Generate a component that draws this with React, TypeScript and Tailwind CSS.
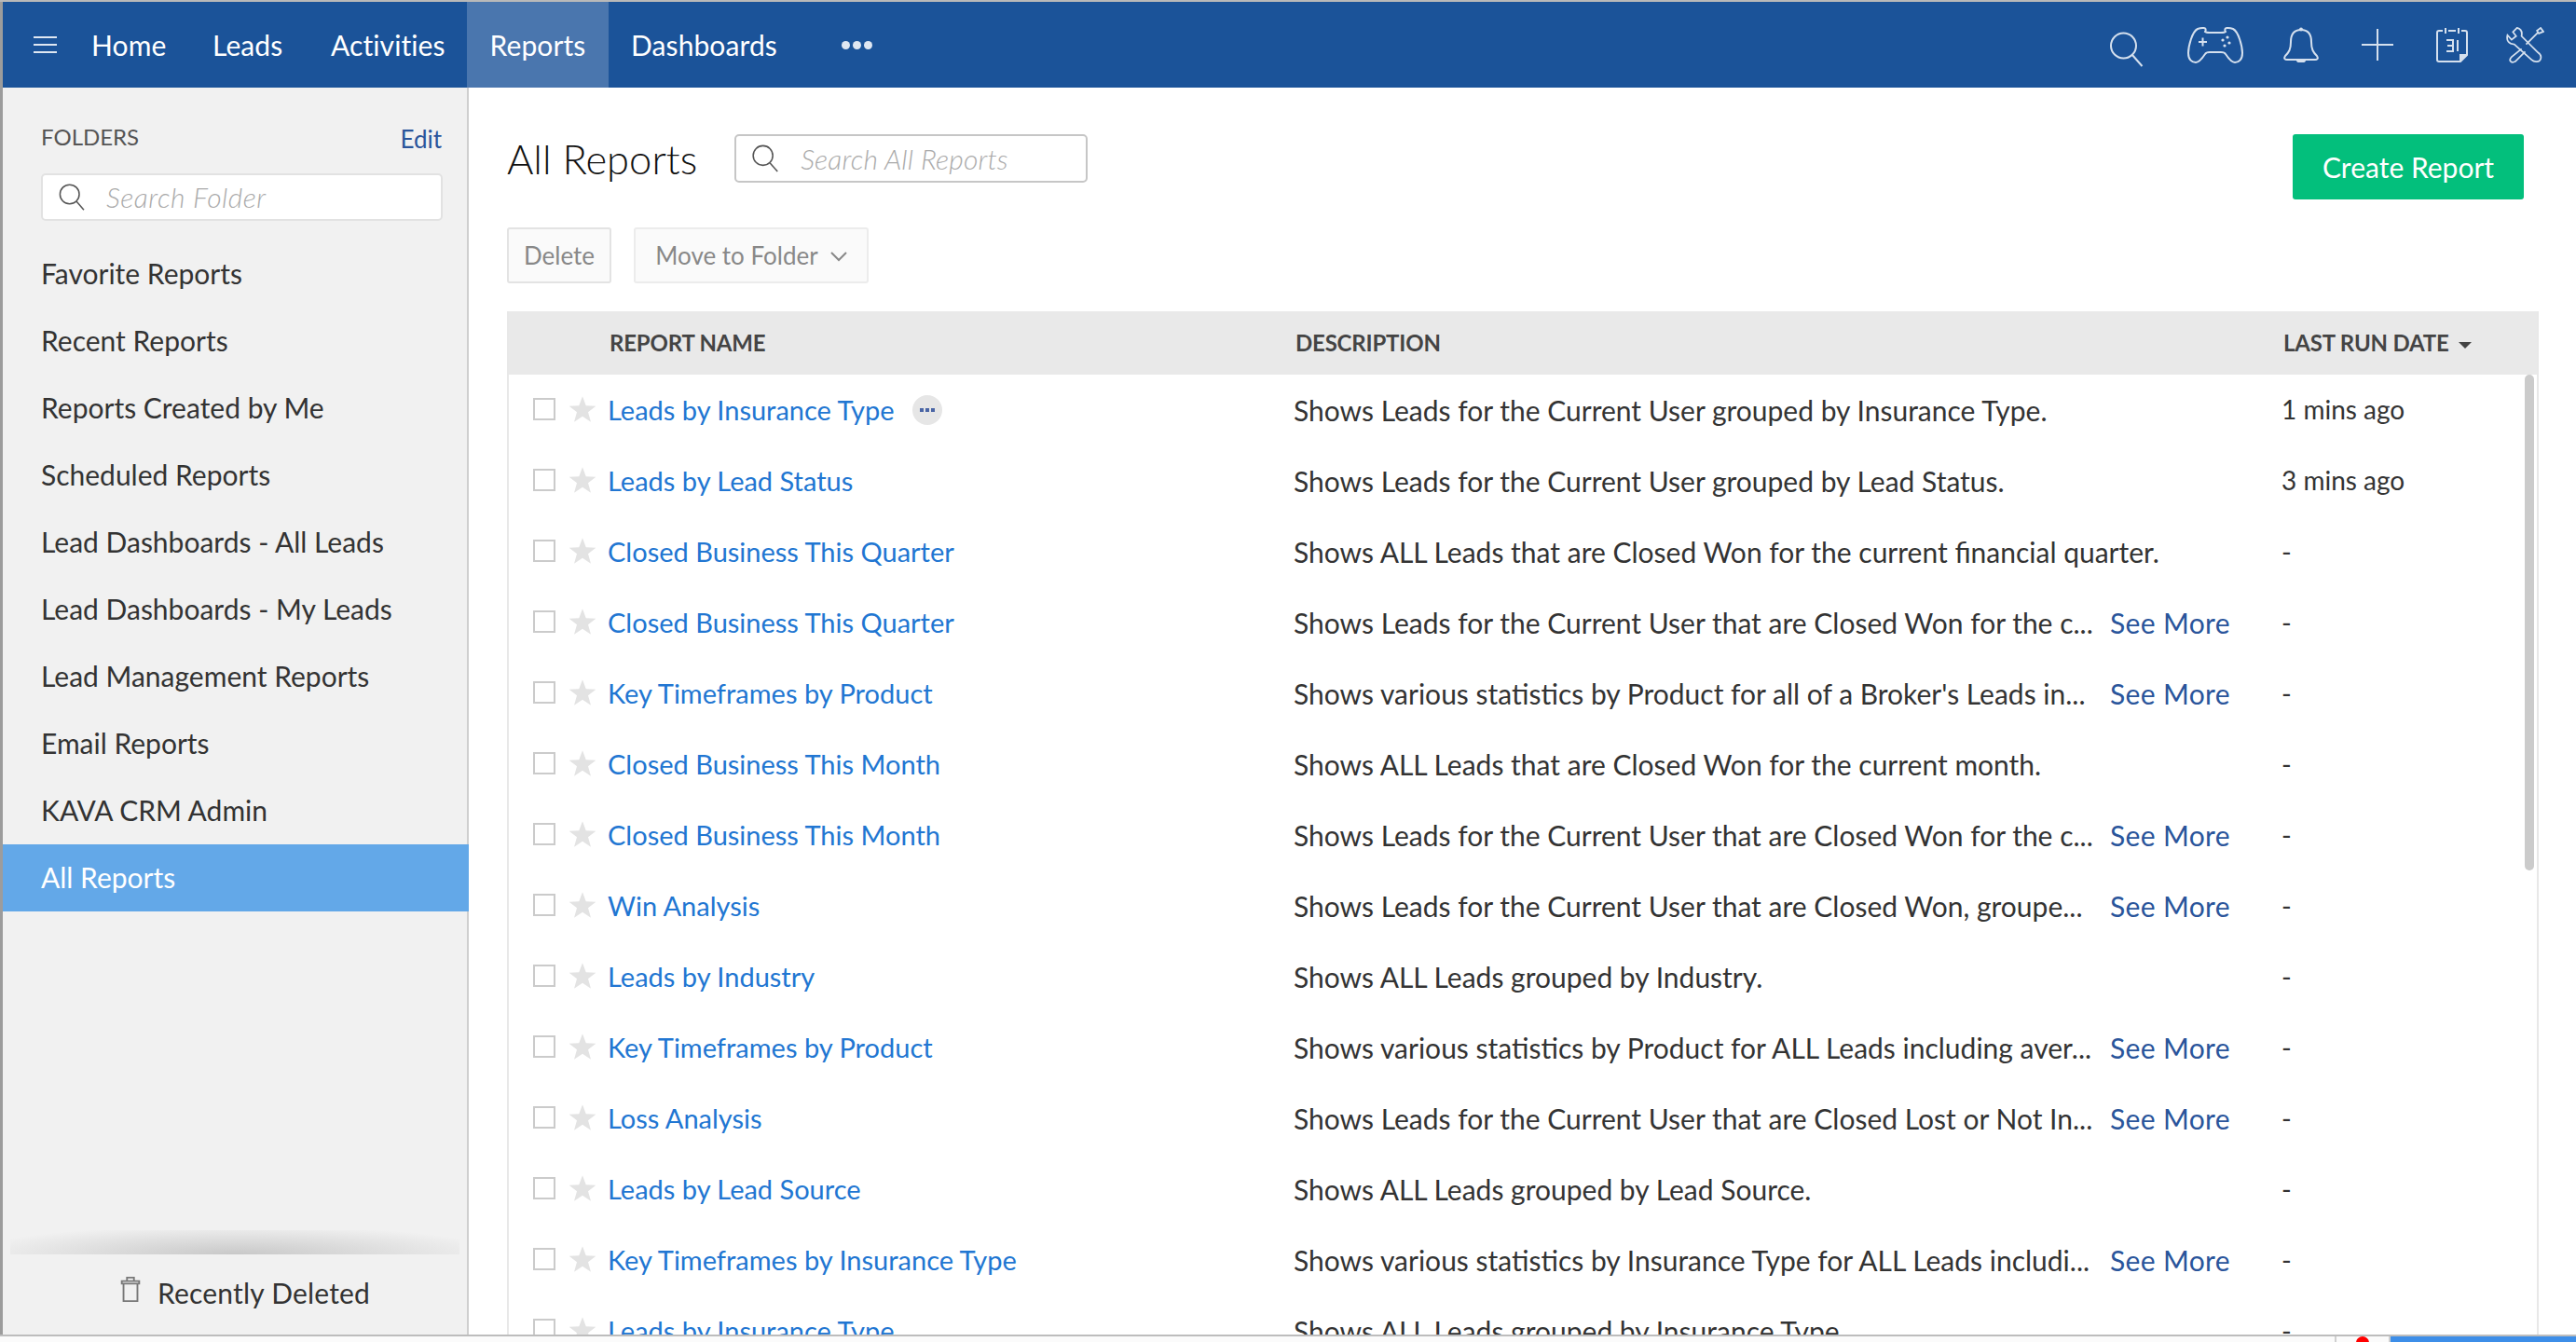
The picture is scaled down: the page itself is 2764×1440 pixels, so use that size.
import React from "react";

const folders = [
  "Favorite Reports",
  "Recent Reports",
  "Reports Created by Me",
  "Scheduled Reports",
  "Lead Dashboards - All Leads",
  "Lead Dashboards - My Leads",
  "Lead Management Reports",
  "Email Reports",
  "KAVA CRM Admin",
  "All Reports",
];

type Report = { name: string; desc: string; more?: boolean; last: string; menu?: boolean };

const reports: Report[] = [
  { name: "Leads by Insurance Type", desc: "Shows Leads for the Current User grouped by Insurance Type.", last: "1 mins ago", menu: true },
  { name: "Leads by Lead Status", desc: "Shows Leads for the Current User grouped by Lead Status.", last: "3 mins ago" },
  { name: "Closed Business This Quarter", desc: "Shows ALL Leads that are Closed Won for the current financial quarter.", last: "-" },
  { name: "Closed Business This Quarter", desc: "Shows Leads for the Current User that are Closed Won for the c...", more: true, last: "-" },
  { name: "Key Timeframes by Product", desc: "Shows various statistics by Product for all of a Broker's Leads in...", more: true, last: "-" },
  { name: "Closed Business This Month", desc: "Shows ALL Leads that are Closed Won for the current month.", last: "-" },
  { name: "Closed Business This Month", desc: "Shows Leads for the Current User that are Closed Won for the c...", more: true, last: "-" },
  { name: "Win Analysis", desc: "Shows Leads for the Current User that are Closed Won, groupe...", more: true, last: "-" },
  { name: "Leads by Industry", desc: "Shows ALL Leads grouped by Industry.", last: "-" },
  { name: "Key Timeframes by Product", desc: "Shows various statistics by Product for ALL Leads including aver...", more: true, last: "-" },
  { name: "Loss Analysis", desc: "Shows Leads for the Current User that are Closed Lost or Not In...", more: true, last: "-" },
  { name: "Leads by Lead Source", desc: "Shows ALL Leads grouped by Lead Source.", last: "-" },
  { name: "Key Timeframes by Insurance Type", desc: "Shows various statistics by Insurance Type for ALL Leads includi...", more: true, last: "-" },
  { name: "Leads by Insurance Type", desc: "Shows ALL Leads grouped by Insurance Type.", last: "-" },
];

function SearchIcon({ className }: { className?: string }) {
  return (
    <svg viewBox="0 0 36 38" fill="none" stroke="currentColor" strokeWidth="2" className={className}>
      <circle cx="15" cy="15" r="13.5" />
      <path d="M24.5 25 L35 37" />
    </svg>
  );
}

function TopIcons() {
  return (
    <div className="ml-auto flex items-center text-[#d5e0ee]">
      <SearchIcon className="w-[37px] h-[38px] mt-[9px]" />
      <svg viewBox="0 0 60 40" fill="none" stroke="currentColor" strokeWidth="2" className="ml-[47px] w-[60px] h-[40px]">
        <path d="M19 6 C22 1 15 1.5 11 3 C5 6 1 22 1 29 C1 36 5 39 9 39 C13 39 17 33 19 30 C20 28 22 28 24 28 L36 28 C38 28 40 28 41 30 C43 33 47 39 51 39 C55 39 59 36 59 29 C59 22 55 6 49 3 C45 1.5 38 1 41 6 C40 7 38 7 36 7 L24 7 C22 7 20 7 19 6 Z" />
        <path d="M12 17 H21 M16.5 12.5 V21.5" />
        <circle cx="43" cy="12" r="1.6" fill="currentColor" stroke="none" />
        <circle cx="38" cy="15" r="1.6" fill="currentColor" stroke="none" />
        <circle cx="45" cy="18" r="1.6" fill="currentColor" stroke="none" />
        <circle cx="40" cy="21" r="1.6" fill="currentColor" stroke="none" />
      </svg>
      <svg viewBox="0 0 38 38" fill="none" stroke="currentColor" strokeWidth="2" className="ml-[43px] w-[38px] h-[38px]">
        <path d="M19 3 C10 3 8 10 8 16 C8 24 6 27 2 31 C0 34 2 35 4 35 L34 35 C36 35 38 34 36 31 C32 27 30 24 30 16 C30 10 28 3 19 3 Z" />
        <path d="M15 36 C16 38 22 38 23 36 Z" fill="currentColor" />
        <circle cx="19" cy="2.5" r="2" fill="currentColor" stroke="none" />
      </svg>
      <svg viewBox="0 0 34 34" fill="none" stroke="currentColor" strokeWidth="2" className="ml-[46px] w-[34px] h-[34px]">
        <path d="M0 17 H34 M17 0 V34" />
      </svg>
      <svg viewBox="0 0 34 38" fill="none" stroke="currentColor" strokeWidth="2" className="ml-[46px] w-[34px] h-[38px]">
        <path d="M7 4 H3 C1.5 4 1 5 1 6 V35 C1 36 1.5 37 3 37 L26 37 L33 30 V6 C33 5 32.5 4 31 4 H27 M13 4 H21" />
        <path d="M10 1 V7 M24 1 V7" />
        <path d="M26 37 V30 H33" fill="currentColor" />
        <path d="M11 14 H18 V26 H11 M12 20 H18 M23 14 V26" strokeWidth="2" />
      </svg>
      <svg viewBox="0 0 42 40" fill="none" stroke="currentColor" strokeWidth="1.8" className="ml-[41px] mr-[34px] w-[41px] h-[39px]">
        <path d="M12 1 L7.5 5.5 L11 10 L6 14 L1.5 9 C0 15 3 19 9 19 L28 36 C31 39 37 39 38 35 C39 32 38 30 35 28 L17 10 C18 5 16 2 12 1 Z" />
        <path d="M36 7 L41 5 L38 1 L34 4 Z M35 6 L22 19 M17 24 L6 33 C2 37 6 40 10 38 L21 27" />
      </svg>
    </div>
  );
}

function TopNav() {
  return (
    <div className="h-[92px] shrink-0 bg-[#1b5399] flex items-stretch text-white text-[30px] tracking-[0.1px]">
      <div className="pl-[33px] w-[95px] flex items-center">
        <svg viewBox="0 0 25 20" stroke="currentColor" strokeWidth="2" className="w-[25px] h-[20px] text-[#dfe7f2]">
          <path d="M0 2 H25 M0 10 H25 M0 18 H25" />
        </svg>
      </div>
      <div className="w-[130px] flex items-center">Home</div>
      <div className="w-[127px] flex items-center">Leads</div>
      <div className="w-[146px] flex items-center">Activities</div>
      <div className="w-[152px] flex items-center justify-center bg-[#4a76ae]">Reports</div>
      <div className="ml-[24px] w-[226px] flex items-center">Dashboards</div>
      <div className="flex items-center gap-[3px]">
        <span className="size-[9px] rounded-full bg-[#dfe7f2]" />
        <span className="size-[9px] rounded-full bg-[#dfe7f2]" />
        <span className="size-[9px] rounded-full bg-[#dfe7f2]" />
      </div>
      <TopIcons />
    </div>
  );
}

function Sidebar() {
  return (
    <div className="w-[500px] shrink-0 bg-[#f1f1f1] border-r-2 border-[#cfcfcf] flex flex-col">
      <div className="pl-[41px] pr-[27px] pt-[31px] flex items-center justify-between">
        <span className="text-[#555] text-[24px]">FOLDERS</span>
        <span className="text-[#2a559b] text-[26px] mt-[5px]">Edit</span>
      </div>
      <div className="ml-[41px] mt-[17px] w-[431px] h-[51px] bg-white border-2 border-[#e2e2e2] rounded-[5px] flex items-center pl-[17px]">
        <SearchIcon className="w-[28px] h-[29px] text-[#555]" />
        <span className="ml-[23px] italic font-light text-[#aaa] text-[30px] tracking-[0.5px]">Search Folder</span>
      </div>
      <div className="mt-[21px] flex flex-col">
        {folders.map((f) => (
          <div
            key={f}
            className={`h-[72px] pl-[41px] pb-[2px] flex items-center text-[30px] ${
              f === "All Reports" ? "-mr-[2px] bg-[#63a8e8] text-white" : "text-[#333]"
            }`}
          >
            {f}
          </div>
        ))}
      </div>
      <div className="mt-auto h-[86px] flex items-center pl-[126px] gap-[18px] pb-[4px] text-[#333] text-[30px] tracking-[0.2px] relative">
        <div className="absolute left-[8px] right-[8px] -top-[26px] h-[26px] bg-[radial-gradient(ellipse_at_bottom,#c8c8c8,transparent_85%)]" />
        <svg viewBox="0 0 22 30" fill="none" stroke="#777" strokeWidth="2" className="w-[22px] h-[28px] mb-[8px]">
          <path d="M3 9 H19 V29 H3 Z M1 6 H21 V9 H1 Z M7 6 V2 H15 V6" />
        </svg>
        Recently Deleted
      </div>
    </div>
  );
}

function Row({ r }: { r: Report }) {
  return (
    <div className="h-[76px] shrink-0 flex items-center text-[29px] text-[#333]">
      <div className="w-[106px] shrink-0 flex items-center pl-[26px] pb-[2px]">
        <span className="size-[24px] border-2 border-[#cbcbcb] bg-white" />
        <svg viewBox="0 0 24 24" className="ml-[14px] size-[30px] text-[#e3e3e3]" fill="currentColor">
          <path d="M12 1 L15 9 L23.5 9.3 L16.8 14.6 L19.2 23 L12 18.2 L4.8 23 L7.2 14.6 L.5 9.3 L9 9 Z" />
        </svg>
      </div>
      <div className="w-[736px] shrink-0 flex items-center text-[#2176d2]">
        {r.name}
        {r.menu && (
          <span className="ml-[19px] w-[32px] h-[32px] rounded-full bg-[#e6e6e6] flex items-center justify-center gap-[2px]">
            <span className="size-[4px] bg-[#4a65a5]" />
            <span className="size-[4px] bg-[#4a65a5]" />
            <span className="size-[4px] bg-[#4a65a5]" />
          </span>
        )}
      </div>
      <div className="w-[1060px] shrink-0 flex items-center whitespace-nowrap text-[30px]">
        <span className="w-[876px] shrink-0">{r.desc}</span>
        {r.more && <span className="text-[#2a559b] tracking-[0.35px]">See More</span>}
      </div>
      <div className={r.last === "-" ? "" : "text-[28px] -mt-[2px]"}>{r.last}</div>
    </div>
  );
}

function ReportsPanel() {
  return (
    <div className="flex-1 min-w-0 pl-[41px] flex flex-col">
      <div className="pt-[50px] flex items-start pr-[56px]">
        <h1 className="text-[43.5px] leading-[52px] font-light text-[#111]">All Reports</h1>
        <div className="ml-[40px] w-[379px] h-[52px] bg-white border-2 border-[#c6c6c6] rounded-[5px] flex items-center pl-[17px]">
          <SearchIcon className="w-[28px] h-[30px] text-[#555]" />
          <span className="ml-[24px] italic font-light text-[#aaa] text-[30px] tracking-[0.15px]">Search All Reports</span>
        </div>
        <button className="ml-auto w-[248px] h-[70px] rounded-[3px] bg-[#03bf7c] text-white text-[30px]">Create Report</button>
      </div>
      <div className="mt-[30px] flex gap-[24px] text-[#888] text-[26px]">
        <div className="w-[112px] h-[60px] bg-[#fafafa] border-2 border-[#e3e3e3] rounded-[3px] flex items-center justify-center">Delete</div>
        <div className="w-[252px] h-[60px] bg-[#fafafa] border-2 border-[#ececec] rounded-[3px] flex items-center justify-center gap-[13px]">
          Move to Folder
          <svg viewBox="0 0 18 11" fill="none" stroke="currentColor" strokeWidth="2" className="w-[18px] h-[11px] mt-[3px]">
            <path d="M1 1 L9 9 L17 1" />
          </svg>
        </div>
      </div>
      <div className="mt-[30px] w-[2180px] flex-1 min-h-0 flex flex-col relative overflow-hidden border-x-2 border-[#e8e8e8]">
        <div className="h-[68px] shrink-0 bg-[#e9e9e9] -mx-[2px] flex items-center text-[#444] text-[24px] font-bold tracking-[-0.2px]">
          <span className="w-[110px] shrink-0" />
          <span className="w-[736px] shrink-0">REPORT NAME</span>
          <span className="w-[1060px] shrink-0">DESCRIPTION</span>
          <span className="flex items-center gap-[10px]">
            LAST RUN DATE
            <span className="border-x-[7px] border-x-transparent border-t-[7px] border-t-[#444] mt-[4px]" />
          </span>
        </div>
        <div className="flex flex-col min-h-0 overflow-hidden">
          {reports.map((r, i) => (
            <Row key={i} r={r} />
          ))}
        </div>
        <div className="absolute right-[3px] top-[68px] w-[10px] h-[532px] rounded-[5px] bg-[#cbcbcb]" />
      </div>
    </div>
  );
}

export default function App() {
  return (
    <div className="h-[1440px] w-[2764px] overflow-hidden bg-white flex flex-col font-['Lato',sans-serif]">
      <div className="h-[2px] shrink-0 bg-[#b9b9b9]" />
      <div className="flex-1 min-h-0 flex flex-col border-l-[3px] border-[#9c9c9c]">
        <TopNav />
        <div className="flex-1 min-h-0 flex">
          <Sidebar />
          <ReportsPanel />
        </div>
      </div>
      <div className="h-[8px] shrink-0 bg-[#fbfbfb] border-t-2 border-[#bdbdbd] flex justify-end">
        <div className="w-[60px] border-x-2 border-[#d0d0d0] flex justify-center overflow-hidden">
          <span className="size-[14px] rounded-full bg-[#ff0000]" />
        </div>
        <div className="w-[199px] bg-[#3d8ee8]" />
      </div>
    </div>
  );
}
